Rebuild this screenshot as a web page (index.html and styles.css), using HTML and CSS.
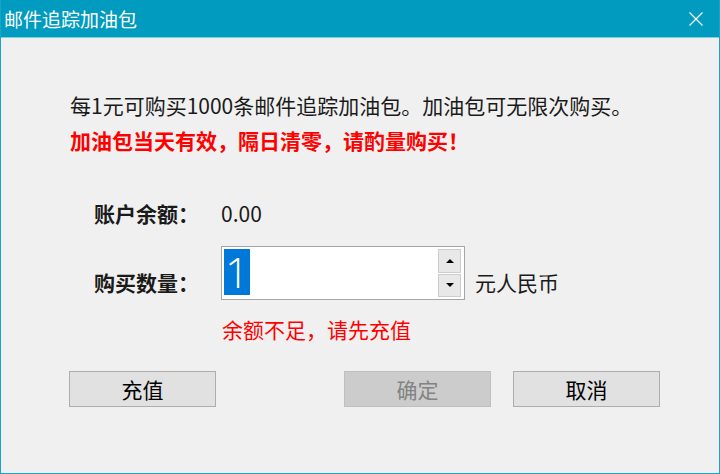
FILE: index.html
```html
<!DOCTYPE html>
<html lang="zh-CN">
<head>
    <meta charset="UTF-8">
    <title>邮件追踪加油包</title>
    <link rel="stylesheet" href="styles.css">
</head>
<body>
    <div class="window">
        <div class="titlebar">
            <span class="title">邮件追踪加油包</span>
            <span class="close">
                <svg width="16" height="16" viewBox="0 0 16 16"><path d="M1.5 1.5 L14.5 14.5 M14.5 1.5 L1.5 14.5" stroke="#fff" stroke-width="1.2" fill="none"/></svg>
            </span>
        </div>
        <div class="content">
            <div class="intro">
                <p class="line">每1元可购买1000条邮件追踪加油包。加油包可无限次购买。</p>
                <p class="line warn">加油包当天有效，隔日清零，请酌量购买！</p>
            </div>
            <div class="form">
                <div class="row">
                    <span class="label">账户余额：</span>
                    <span class="value">0.00</span>
                </div>
                <div class="row row-qty">
                    <span class="label">购买数量：</span>
                    <div class="spinbox">
                        <div class="spin-input"><span class="sel">1</span></div>
                        <div class="spin-buttons">
                            <span class="spin-btn"><span class="arrow-up"></span></span>
                            <span class="spin-btn"><span class="arrow-down"></span></span>
                        </div>
                    </div>
                    <span class="unit">元人民币</span>
                </div>
                <div class="error">余额不足，请先充值</div>
            </div>
            <div class="actions">
                <button class="btn">充值</button>
                <button class="btn btn-disabled push">确定</button>
                <button class="btn">取消</button>
            </div>
        </div>
    </div>
</body>
</html>
```

FILE: styles.css
```css
body {
    margin: 0;
    background-color: #f0f0f0;
    font-family: "Noto Sans CJK SC", "Noto Sans", sans-serif;
    color: #1a1a1a;
}

.window {
    width: 720px;
    height: 474px;
    overflow: hidden;
    box-sizing: border-box;
    border: 1px solid #1aa3c6;
    border-top: none;
}

.titlebar {
    height: 38px;
    background-color: #009bbf;
    display: flex;
    align-items: center;
    justify-content: space-between;
    padding-left: 3px;
    border-bottom: 1px solid #7fcde0;
    box-sizing: border-box;
}

.title {
    color: #fff;
    font-size: 19px;
}

.close {
    width: 46px;
    display: flex;
    justify-content: center;
    align-items: center;
    height: 100%;
}

.content {
    padding-top: 50px;
}

.intro {
    padding-left: 69px;
}

.line {
    margin: 0;
    font-size: 21px;
    line-height: 35px;
}

.warn {
    color: #ff0000;
    font-weight: bold;
}

.form {
    padding-left: 93px;
    margin-top: 40px;
}

.row {
    display: flex;
    align-items: center;
    height: 30px;
}

.row-qty {
    height: 54px;
    margin-top: 18px;
    align-items: flex-end;
}

.label {
    width: 127px;
    font-size: 21px;
    font-weight: bold;
    line-height: 30px;
}

.row-qty .label,
.row-qty .unit {
    margin-bottom: 3px;
}

.value {
    font-size: 21px;
    line-height: 30px;
}

.spinbox {
    width: 244px;
    height: 54px;
    box-sizing: border-box;
    border: 1px solid #a6a6a6;
    background-color: #fff;
    display: flex;
    padding: 2px;
}

.spin-input {
    flex: 1;
}

.sel {
    display: inline-block;
    background-color: #0078d7;
    color: #fff;
    font-family: "Open Sans", sans-serif;
    font-weight: 300;
    font-size: 42px;
    line-height: 46px;
    width: 26px;
    text-align: center;
}

.spin-buttons {
    width: 23px;
    display: flex;
    flex-direction: column;
    gap: 1px;
    margin-right: 1px;
}

.spin-btn {
    flex: 1;
    background-color: #e8e8e8;
    border: 1px solid #cdcdcd;
    display: flex;
    align-items: center;
    justify-content: center;
}

.arrow-up {
    border-left: 4px solid transparent;
    border-right: 4px solid transparent;
    border-bottom: 4px solid #000;
}

.arrow-down {
    border-left: 4px solid transparent;
    border-right: 4px solid transparent;
    border-top: 4px solid #000;
}

.unit {
    margin-left: 10px;
    font-size: 21px;
    line-height: 30px;
}

.error {
    margin-left: 128px;
    margin-top: 14px;
    color: #ff0000;
    font-size: 21px;
    line-height: 30px;
}

.actions {
    display: flex;
    padding-left: 68px;
    padding-right: 59px;
    margin-top: 27px;
    gap: 22px;
}

.btn {
    width: 147px;
    height: 36px;
    background-color: #e1e1e1;
    border: 1px solid #adadad;
    font-family: "Noto Sans CJK SC", sans-serif;
    font-size: 21px;
    color: #000;
    padding: 0;
}

.btn-disabled {
    background-color: #cccccc;
    border-color: #bfbfbf;
    color: #838383;
}

.push {
    margin-left: auto;
}
```
